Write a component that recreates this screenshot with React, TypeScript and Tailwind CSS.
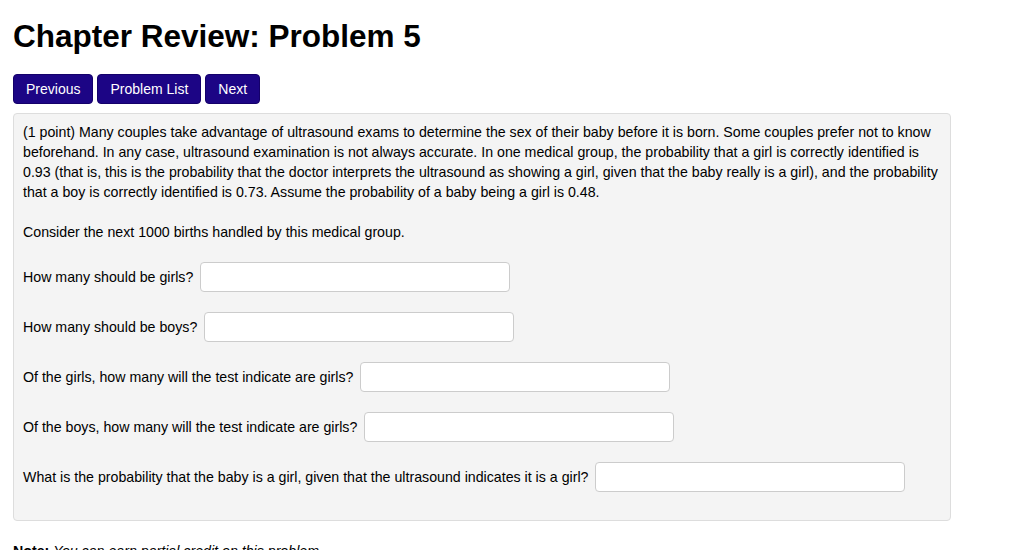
import React from 'react'

const questions = [
  'How many should be girls?',
  'How many should be boys?',
  'Of the girls, how many will the test indicate are girls?',
  'Of the boys, how many will the test indicate are girls?',
  'What is the probability that the baby is a girl, given that the ultrasound indicates it is a girl?',
]

export default function App() {
  return (
    <div className="min-h-screen bg-white px-[13px] font-['Liberation_Sans',Arial,sans-serif] text-black">
      <h1 className="pt-[17px] text-[31.5px] font-bold leading-[38px]">Chapter Review: Problem 5</h1>

      {/* nav buttons */}
      <div className="mt-[19px] flex gap-1">
        {['Previous', 'Problem List', 'Next'].map((label) => (
          <button
            key={label}
            className="h-[30px] rounded-[4px] border border-[#14006a] bg-[#1c0585] px-[12px] text-[14px] text-white"
          >
            {label}
          </button>
        ))}
      </div>

      {/* problem body */}
      <div className="mt-[9px] w-[938px] rounded-[4px] border border-[#dddddd] bg-[#f4f4f4] px-[9px] pb-[28px] pt-[8px] text-[14.2px] leading-[20px]">
        <p>
          (1 point) Many couples take advantage of ultrasound exams to determine the sex of their baby before it is
          born. Some couples prefer not to know beforehand. In any case, ultrasound examination is not always accurate.
          In one medical group, the probability that a girl is correctly identified is 0.93 (that is, this is the
          probability that the doctor interprets the ultrasound as showing a girl, given that the baby really is a
          girl), and the probability that a boy is correctly identified is 0.73. Assume the probability of a baby being
          a girl is 0.48.
        </p>
        <p className="mt-[20px]">Consider the next 1000 births handled by this medical group.</p>

        <div className="mt-[20px] flex flex-col gap-[20px]">
          {questions.map((q) => (
            <div key={q} className="flex items-center">
              <span>{q}</span>
              <input
                type="text"
                className="ml-[7px] h-[30px] w-[310px] rounded-[4px] border border-[#cccccc] bg-white px-2 outline-none"
              />
            </div>
          ))}
        </div>
      </div>

      <p className="mt-[20px] text-[14.2px] leading-[20px]">
        <span className="font-bold">Note:</span> <em>You can earn partial credit on this problem.</em>
      </p>
    </div>
  )
}
